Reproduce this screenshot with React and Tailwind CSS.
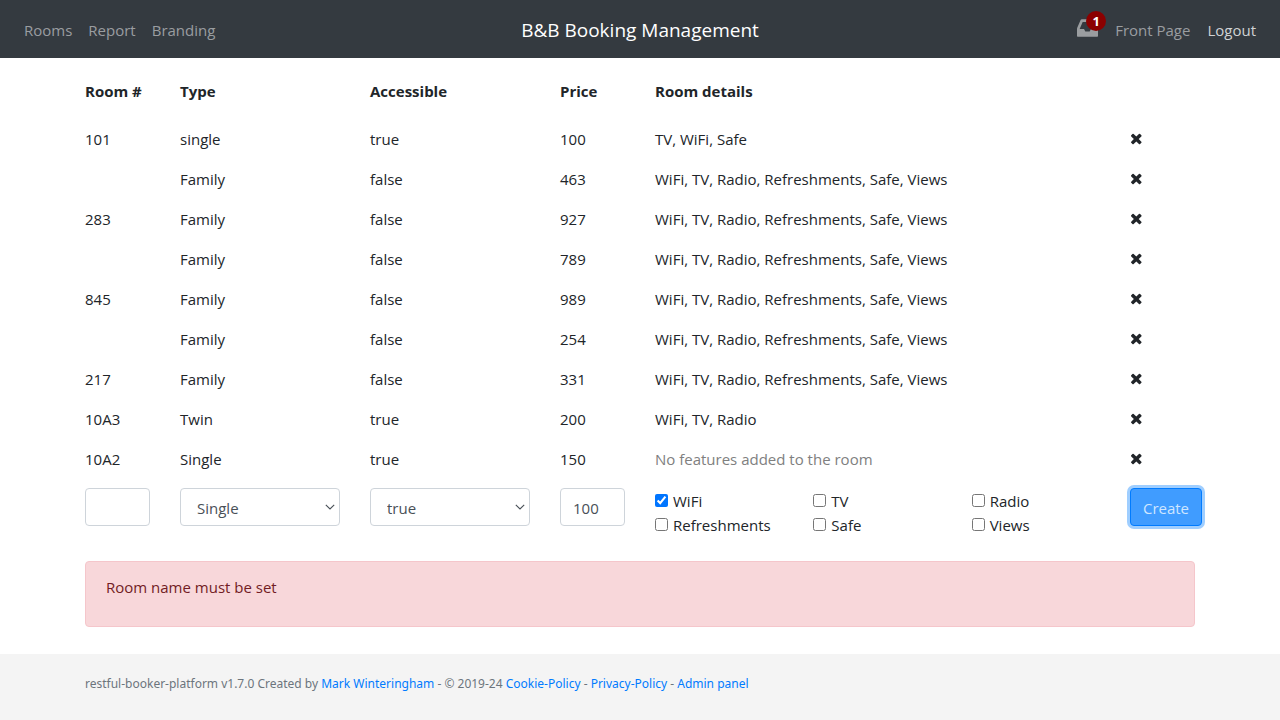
const FEATURES = ["WiFi", "TV", "Radio", "Refreshments", "Safe", "Views"];
const ALL = "WiFi, TV, Radio, Refreshments, Safe, Views";

const ROOMS = [
  { name: "101", type: "single", accessible: "true", price: "100", details: "TV, WiFi, Safe" },
  { name: "", type: "Family", accessible: "false", price: "463", details: ALL },
  { name: "283", type: "Family", accessible: "false", price: "927", details: ALL },
  { name: "", type: "Family", accessible: "false", price: "789", details: ALL },
  { name: "845", type: "Family", accessible: "false", price: "989", details: ALL },
  { name: "", type: "Family", accessible: "false", price: "254", details: ALL },
  { name: "217", type: "Family", accessible: "false", price: "331", details: ALL },
  { name: "10A3", type: "Twin", accessible: "true", price: "200", details: "WiFi, TV, Radio" },
  { name: "10A2", type: "Single", accessible: "true", price: "150", details: "" },
];

const FIELD =
  "block h-[38px] w-full rounded border border-[#ced4da] bg-white text-[#495057] outline-none";

function InboxIcon() {
  return (
    <svg viewBox="128 256 1536 1280" className="h-[18px] w-[21px]" fill="currentColor" aria-hidden="true">
      <path d="M1151 960h316q-1-3-2.5-8.5t-2.5-7.5l-212-496h-708l-212 496q-1 3-2.5 8.5t-2.5 7.5h316l95 192h320zm513 30v482q0 26-19 45t-45 19h-1408q-26 0-45-19t-19-45v-482q0-62 25-123l238-552q10-25 36.5-42t52.5-17h832q26 0 52.5 17t36.5 42l238 552q25 61 25 123z" />
    </svg>
  );
}

function RemoveIcon() {
  return (
    <svg viewBox="192 64 1456 1792" className="h-4 w-[13px]" fill="currentColor" aria-hidden="true">
      <path d="M1490 1322q0 40-28 68l-136 136q-28 28-68 28t-68-28l-294-294-294 294q-28 28-68 28t-68-28l-136-136q-28-28-28-68t28-68l294-294-294-294q-28-28-28-68t28-68l136-136q28-28 68-28t68 28l294 294 294-294q28-28 68-28t68 28l136 136q28 28 28 68t-28 68l-294 294 294 294q28 28 28 68z" />
    </svg>
  );
}

function Select({ label, options }) {
  return (
    <div className="relative">
      <select aria-label={label} className={`${FIELD} appearance-none pt-0.5 pr-6 pl-4`}>
        {options.map((o) => (
          <option key={o}>{o}</option>
        ))}
      </select>
      <svg
        viewBox="0 0 10 6"
        className="pointer-events-none absolute top-4 right-[5px] h-1.5 w-2.5 text-[#495057]"
        fill="none"
        stroke="currentColor"
        strokeWidth="1.1"
        aria-hidden="true"
      >
        <path d="M0.8 0.8 5 5 9.2 0.8" />
      </svg>
    </div>
  );
}

function Navbar() {
  return (
    <nav className="grid h-[58px] grid-cols-[1fr_auto_1fr] items-center bg-[#343a40] px-6 pt-px text-[#9a9da0]">
      <div className="flex gap-4">
        <a href="#rooms">Rooms</a>
        <a href="#report">Report</a>
        <a href="#branding">Branding</a>
      </div>
      <a href="#admin" className="text-[19px] text-white">
        B&amp;B Booking Management
      </a>
      <div className="flex items-center justify-end gap-[17px]">
        <a href="#messages" aria-label="Messages" className="relative -mt-1">
          <InboxIcon />
          <span className="absolute -top-2 -right-2 flex size-5 items-center justify-center rounded-full bg-[#8b0000] text-[13px] leading-5 font-bold text-white">
            1
          </span>
        </a>
        <a href="#front">Front Page</a>
        <a href="#logout" className="text-[#d0d2d4]">
          Logout
        </a>
      </div>
    </nav>
  );
}

export default function App() {
  return (
    <div className="flex min-h-screen flex-col bg-white font-['Open_Sans','Noto_Sans',sans-serif] text-[15px] leading-6 text-[#212529]">
      <Navbar />
      <main className="mx-auto w-full max-w-[1140px] flex-1 pt-[13px] pb-[27px]">
        <form onSubmit={(e) => e.preventDefault()}>
          <table className="w-full table-fixed text-left">
            <colgroup>
              <col className="w-1/12" />
              <col className="w-2/12" />
              <col className="w-2/12" />
              <col className="w-1/12" />
              <col className="w-5/12" />
              <col className="w-1/12" />
            </colgroup>
            <thead>
              <tr>
                {["Room #", "Type", "Accessible", "Price", "Room details"].map((h) => (
                  <th key={h} scope="col" className="px-[15px] pt-2 pb-4 font-bold whitespace-nowrap">
                    {h}
                  </th>
                ))}
                <td />
              </tr>
            </thead>
            <tbody>
              {ROOMS.map((r, i) => (
                <tr key={i} className="h-10">
                  <td className="px-[15px]">{r.name}</td>
                  <td className="px-[15px]">{r.type}</td>
                  <td className="px-[15px]">{r.accessible}</td>
                  <td className="px-[15px]">{r.price}</td>
                  <td className="px-[15px]">
                    {r.details || <span className="text-[#808080]">No features added to the room</span>}
                  </td>
                  <td className="px-[15px]">
                    <button type="button" aria-label="Delete room" className="block">
                      <RemoveIcon />
                    </button>
                  </td>
                </tr>
              ))}
              <tr className="align-top">
                <td className="px-[15px] pt-[9px]">
                  <input type="text" aria-label="Room #" className={`${FIELD} px-3`} />
                </td>
                <td className="px-[15px] pt-[9px]">
                  <Select label="Type" options={["Single", "Twin", "Double", "Family", "Suite"]} />
                </td>
                <td className="px-[15px] pt-[9px]">
                  <Select label="Accessible" options={["true", "false"]} />
                </td>
                <td className="px-[15px] pt-[9px]">
                  <input type="text" aria-label="Price" defaultValue="100" className={`${FIELD} px-3 pt-0.5`} />
                </td>
                <td className="pt-[9px] pl-[15px]">
                  <div className="-mr-[15px] grid grid-cols-3 pt-px">
                    {FEATURES.map((f) => (
                      <label key={f} className="flex items-center gap-[5px]">
                        <input
                          type="checkbox"
                          defaultChecked={f === "WiFi"}
                          className="-mt-0.5 size-[13px] accent-[#0075ff]"
                        />
                        {f}
                      </label>
                    ))}
                  </div>
                </td>
                <td className="px-[15px] pt-[9px]">
                  <button
                    type="submit"
                    className="h-[38px] w-[72px] rounded border border-[#007bff] bg-[#409cff] pt-0.5 text-[#cfe6ff] ring-3 ring-[#9fceff]"
                  >
                    Create
                  </button>
                </td>
              </tr>
            </tbody>
          </table>
        </form>
        <div
          role="alert"
          className="mx-[15px] mt-6 rounded border border-[#f5c6cb] bg-[#f8d7da] px-5 pt-[13px] pb-[27px] text-[#721c24]"
        >
          Room name must be set
        </div>
      </main>
      <footer className="bg-[#f4f4f4] pt-[18px] pb-6">
        <p className="mx-auto max-w-[1140px] px-[15px] font-['Noto_Sans',sans-serif] text-[12px] text-[#6c757d]">
          restful-booker-platform v1.7.0 Created by{" "}
          <a href="#author" className="text-[#007bff]">Mark Winteringham</a> - © 2019-24{" "}
          <a href="#cookie" className="text-[#007bff]">Cookie-Policy</a> -{" "}
          <a href="#privacy" className="text-[#007bff]">Privacy-Policy</a> -{" "}
          <a href="#admin" className="text-[#007bff]">Admin panel</a>
        </p>
      </footer>
    </div>
  );
}
